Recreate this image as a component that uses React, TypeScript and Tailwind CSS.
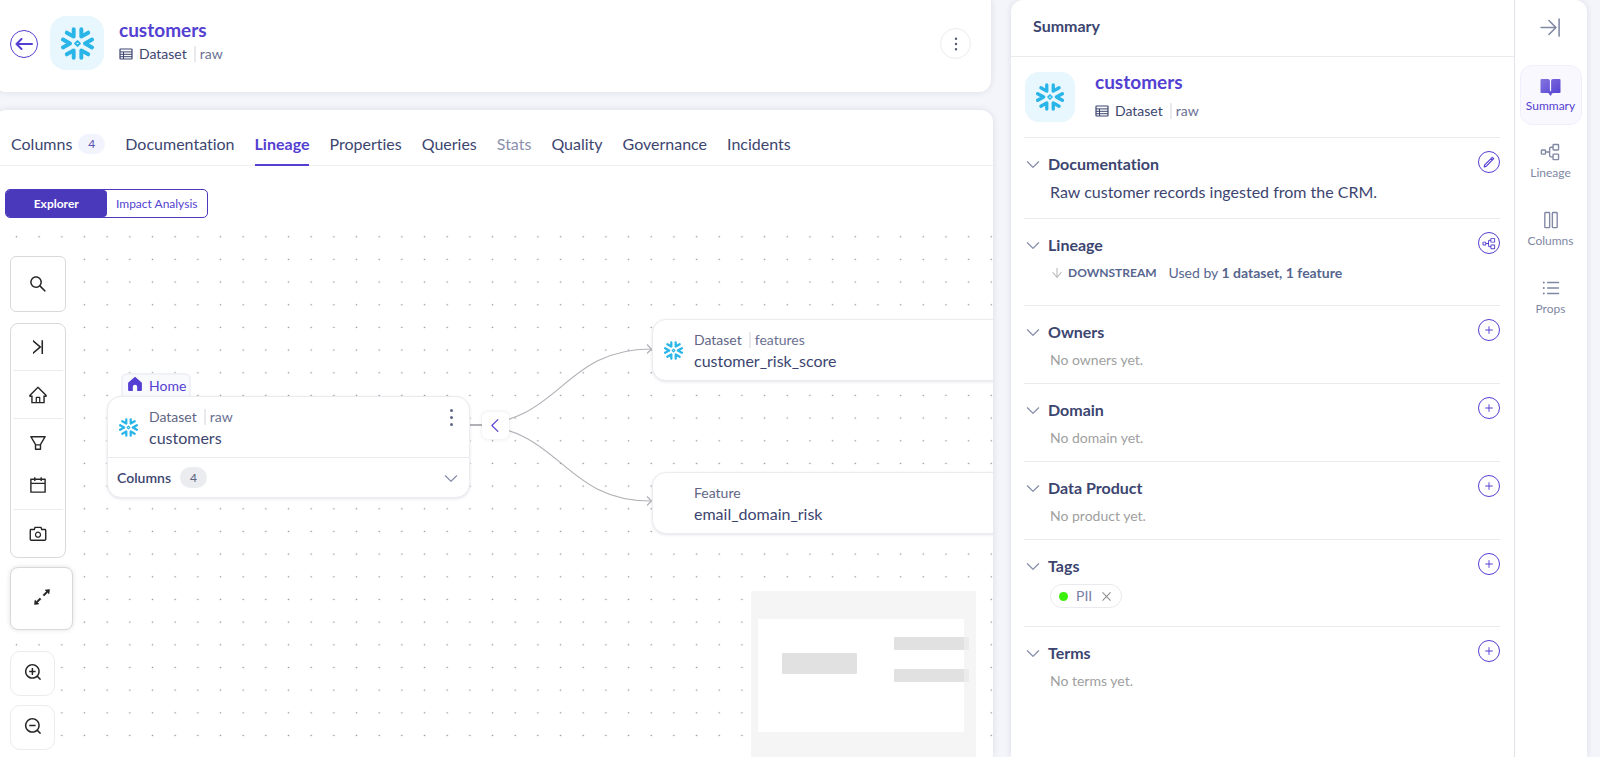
import type { ReactNode } from "react";
import {
  AiOutlineArrowDown,
  AiOutlineArrowsAlt,
  AiOutlineCalendar,
  AiOutlineCamera,
  AiOutlineClose,
  AiOutlineFilter,
  AiOutlineHome,
  AiOutlineSearch,
  AiOutlineVerticalLeft,
  AiOutlineZoomIn,
  AiOutlineZoomOut,
} from "react-icons/ai";
import {
  PiArrowLineRight,
  PiCaretDown,
  PiCaretLeft,
  PiColumns,
  PiDotsThreeVerticalBold,
  PiListBullets,
  PiPlusBold,
  PiTreeStructure,
} from "react-icons/pi";

const tabs = [
  { name: "Columns", count: 4 },
  { name: "Documentation" },
  { name: "Lineage", active: true },
  { name: "Properties" },
  { name: "Queries" },
  { name: "Stats", disabled: true },
  { name: "Quality" },
  { name: "Governance" },
  { name: "Incidents" },
];

const railItems = [
  { name: "Lineage", icon: <PiTreeStructure size={22} /> },
  { name: "Columns", icon: <PiColumns size={22} /> },
  { name: "Props", icon: <PiListBullets size={22} /> },
];

function SnowflakeLogo({ size }: { size: number }) {
  return (
    <svg
      width={size}
      height={size}
      viewBox="0 0 32 32"
      fill="none"
      stroke="#29b5e8"
      strokeWidth="3.800"
      strokeLinecap="round"
      strokeLinejoin="round"
      aria-hidden="true"
    >
      <path d="M12.300 2.200V9.300L5.600 5.500M19.700 2.200V9.300L26.400 5.500" />
      <path d="M12.300 29.800V22.700L5.600 26.500M19.700 29.800V22.700L26.400 26.500" />
      <path d="M1.900 12.200 8.700 16 1.900 19.800M30.100 12.200 23.300 16 30.100 19.800" />
      <path d="M16 13.700 18.300 16 16 18.300 13.700 16Z" strokeWidth="1.900" />
    </svg>
  );
}

function TableIcon() {
  return (
    <svg width="14" height="12" viewBox="0 0 14 12" fill="none" stroke="currentColor" aria-hidden="true">
      <rect x="1" y="1" width="12" height="10" rx="0.5" strokeWidth="1.2" />
      <path d="M1 3.9h12M1 6.3h12M1 8.7h12M4.5 3.9V11" strokeWidth="1" />
    </svg>
  );
}

function BackIcon() {
  return (
    <svg width="18" height="12" viewBox="0 0 18 12" fill="none" stroke="currentColor" strokeWidth="2" aria-hidden="true">
      <path d="M17 6H1.500M6.500 1 1.500 6 6.500 11" strokeLinecap="round" strokeLinejoin="round" />
    </svg>
  );
}

function PencilIcon() {
  return (
    <svg width="12" height="12" viewBox="0 0 12 12" fill="none" stroke="currentColor" strokeWidth="1.200" aria-hidden="true">
      <path d="M1.200 10.800 1.700 8.900 9.300 1.300 10.700 2.700 3.100 10.300ZM7.800 2.800 9.200 4.200" strokeLinejoin="round" />
    </svg>
  );
}

function HomeIcon() {
  return (
    <svg width="16" height="16" viewBox="0 0 16 16" fill="#533fd1" aria-hidden="true">
      <path d="M8 .8 1.6 6.2a1.4 1.4 0 0 0-.5 1.1V14a1 1 0 0 0 1 1h3.7v-4a2.2 2.2 0 0 1 4.4 0v4h3.7a1 1 0 0 0 1-1V7.300a1.400 1.400 0 0 0-.5-1.100Z" />
    </svg>
  );
}

function BookIcon() {
  return (
    <svg width="21" height="18" viewBox="0 0 21 18" aria-hidden="true">
      <defs>
        <linearGradient id="book" x1="0" y1="0" x2="1" y2="1">
          <stop offset="0" stopColor="#8375df" />
          <stop offset="1" stopColor="#533fd1" />
        </linearGradient>
      </defs>
      <path
        d="M1.500 1H8Q9.900 1 9.900 2.800V12.500Q9.900 13.200 10.500 13.200T11.100 12.500V2.800Q11.100 1 13 1H19.500Q20.500 1 20.500 2V14Q20.500 15 19.500 15H13.500Q11.500 15 11.300 17Q11 17.800 10.500 17.800T9.700 17Q9.500 15 7.500 15H1.500Q.5 15 .5 14V2Q.5 1 1.500 1Z"
        fill="url(#book)"
      />
    </svg>
  );
}

function EntityType({ type, detail }: { type: string; detail?: string }) {
  return (
    <span className="flex items-center text-sm leading-5">
      {type}
      {detail && (
        <span className="ml-[7px] flex items-center gap-1 text-[#6b7193]">
          <span className="h-4 w-0.5 bg-[#e9eaee]" />
          {detail}
        </span>
      )}
    </span>
  );
}

function Section({
  title,
  action,
  icon,
  children,
}: {
  title: string;
  action: string;
  icon?: ReactNode;
  children: ReactNode;
}) {
  return (
    <section className="border-t border-[#e9eaee] pt-[13px]">
      <div className="flex h-[22px] items-center">
        <h3 className="flex-1 pt-1">
          <button className="flex items-center gap-1.5 text-base leading-5 font-bold text-[#3c4570]">
            <PiCaretDown size={18} className="text-[#8088a3]" />
            {title}
          </button>
        </h3>
        <button
          aria-label={action}
          className="flex size-[22px] items-center justify-center rounded-full border border-[#533fd1] text-[#533fd1]"
        >
          {icon ?? <PiPlusBold size={10} />}
        </button>
      </div>
      {children}
    </section>
  );
}

function EmptyText({ children }: { children: ReactNode }) {
  return <p className="mt-[9px] pb-[13px] pl-[26px] text-sm leading-5 text-[#a0a0a0]">{children}</p>;
}

function Header() {
  return (
    <header className="-ml-1.5 mr-0.5 flex h-[92px] shrink-0 items-start rounded-b-xl bg-white pt-4 pr-5 pl-4 shadow-[0_0_6px_rgba(50,50,93,0.12)]">
      <button
        aria-label="Back"
        className="mt-3.5 flex size-7 items-center justify-center rounded-full border border-[#533fd1] text-[#533fd1]"
      >
        <BackIcon />
      </button>
      <div className="ml-3 flex size-[54px] items-center justify-center rounded-2xl bg-[#e8f6fd]">
        <SnowflakeLogo size={33} />
      </div>
      <div className="ml-[15px] flex-1 text-[#3c4570]">
        <h1 className="pt-0.5 text-[19px] leading-6 font-bold text-[#533fd1]">customers</h1>
        <div className="mt-0.5 flex items-center gap-1.5">
          <TableIcon />
          <EntityType type="Dataset" detail="raw" />
        </div>
      </div>
      <button
        aria-label="More options"
        className="mt-3 flex size-[31px] items-center justify-center rounded-full border border-[#ebecf0] text-[#5c6370]"
      >
        <PiDotsThreeVerticalBold size={20} />
      </button>
    </header>
  );
}

function Tabs() {
  return (
    <nav className="flex h-14 shrink-0 items-end gap-5 border-b border-[#eeeeee] pl-[17px] text-base text-[#3c4570]">
      {tabs.map((tab) => (
        <button
          key={tab.name}
          disabled={tab.disabled}
          className={
            tab.active
              ? "-mb-px border-b-2 border-[#533fd1] pb-2 leading-6 font-bold text-[#533fd1]"
              : "flex items-center pb-[9px] leading-6 disabled:text-[#8b90ad]"
          }
        >
          {tab.name}
          {tab.count && (
            <span className="ml-1.5 rounded-full bg-[#f1f3fd] px-2.5 text-xs leading-5 text-[#5c4fae]">
              {tab.count}
            </span>
          )}
        </button>
      ))}
    </nav>
  );
}

function Controls() {
  return (
    <div className="absolute top-8 left-2.5 flex flex-col items-start text-[#262626]">
      <button
        aria-label="Search"
        className="flex size-14 items-center justify-center rounded-md border border-[#d9d9d9] bg-white"
      >
        <AiOutlineSearch size={20} />
      </button>
      <div className="mt-[11px] flex w-14 flex-col divide-y divide-[#ececec] rounded-lg border border-[#d9d9d9] bg-white px-0.5">
        <button aria-label="Collapse controls" className="flex h-[47px] w-full items-center justify-center">
          <AiOutlineVerticalLeft size={20} />
        </button>
        <button aria-label="Home" className="flex h-12 w-full items-center justify-center">
          <AiOutlineHome size={20} />
        </button>
        <div className="flex h-[91px] flex-col items-center justify-center">
          <button aria-label="Filter" className="flex h-[42px] w-full items-center justify-center">
            <AiOutlineFilter size={20} />
          </button>
          <button aria-label="Time range" className="flex h-[42px] w-full items-center justify-center">
            <AiOutlineCalendar size={20} />
          </button>
        </div>
        <button aria-label="Screenshot" className="flex h-[47px] w-full items-center justify-center">
          <AiOutlineCamera size={20} />
        </button>
      </div>
      <button
        aria-label="Full screen"
        className="mt-[9px] flex size-[63px] items-center justify-center rounded-lg border border-[#d9d9d9] bg-white pb-1 shadow-[0_0_5px_rgba(0,0,0,0.12)]"
      >
        <AiOutlineArrowsAlt size={22} stroke="currentColor" strokeWidth={24} />
      </button>
      <button
        aria-label="Zoom in"
        className="mt-[21px] flex size-[45px] items-center justify-center rounded-[10px] border border-[#ececec] bg-white pb-1"
      >
        <AiOutlineZoomIn size={20} />
      </button>
      <button
        aria-label="Zoom out"
        className="mt-[9px] flex size-[45px] items-center justify-center rounded-[10px] border border-[#ececec] bg-white pb-1"
      >
        <AiOutlineZoomOut size={20} />
      </button>
    </div>
  );
}

const nodeClass =
  "absolute w-[363px] rounded-[14px] border border-[#ebecf0] bg-white text-[#5f6685] shadow-[0_1px_3px_rgba(50,50,93,0.12)]";

function NodeHead({ name, type, detail }: { name: string; type: string; detail?: string }) {
  return (
    <div className="flex h-[60px] items-center pl-[11px]">
      <div className="w-[30px]">{detail && <SnowflakeLogo size={19} />}</div>
      <div className="pt-px">
        <EntityType type={type} detail={detail} />
        <p className="text-base leading-[22px] text-[#3c4570]">{name}</p>
      </div>
    </div>
  );
}

function Canvas() {
  return (
    <div className="relative flex-1 overflow-hidden">
      <svg className="absolute inset-0 h-full w-full" aria-hidden="true">
        <defs>
          <pattern id="dots" x="5.200" y="1.400" width="22.670" height="22.670" patternUnits="userSpaceOnUse">
            <circle cx="11.300" cy="11.300" r="0.800" fill="#91919a" />
          </pattern>
        </defs>
        <rect width="100%" height="100%" fill="url(#dots)" />
        <g fill="none" stroke="#b1b1b7" strokeWidth="1.200">
          <path d="M470 201H482" strokeWidth="2" />
          <path d="M470 201C561 201 561 125 651 125" />
          <path d="M470 201C561 201 561 277 651 277" />
          <path d="M647 120.500 651.500 125 647 129.500M647 272.500 651.500 277 647 281.500" />
        </g>
      </svg>

      <div className="absolute top-[149px] left-[121px] flex h-7 w-[70px] gap-1.5 rounded-t-md border-2 border-[#f0f1f6] bg-[#f9fafc] pt-px pl-1 text-sm leading-5 text-[#533fd1]">
        <HomeIcon />
        Home
      </div>
      <article className={`${nodeClass} top-[172px] left-[107px]`}>
        <div className="flex justify-between">
          <NodeHead name="customers" type="Dataset" detail="raw" />
          <button aria-label="Node menu" className="mr-3.5 flex w-2 flex-col items-center gap-1 pt-3">
            <span className="size-[3px] rounded-full bg-[#5f6685]" />
            <span className="size-[3px] rounded-full bg-[#5f6685]" />
            <span className="size-[3px] rounded-full bg-[#5f6685]" />
          </button>
        </div>
        <button className="flex h-10 w-full items-center border-t border-[#e9eaee] px-[9px] text-sm font-semibold text-[#3c4570]">
          Columns
          <span className="ml-[9px] rounded-full bg-[#ebecf0] px-2.5 text-xs leading-[21px] font-medium text-[#5f6685]">4</span>
          <PiCaretDown size={18} className="ml-auto text-[#8088a3]" />
        </button>
      </article>
      <button
        aria-label="Contract"
        className="absolute top-[188px] left-[482px] flex size-[27px] items-center justify-center rounded-md bg-white text-[#533fd1] shadow-[0_0_4px_rgba(50,50,93,0.12)]"
      >
        <PiCaretLeft size={19} />
      </button>
      <article className={`${nodeClass} top-[95px] left-[652px]`}>
        <NodeHead name="customer_risk_score" type="Dataset" detail="features" />
      </article>
      <article className={`${nodeClass} top-[248px] left-[652px]`}>
        <NodeHead name="email_domain_risk" type="Feature" />
      </article>

      <svg className="absolute top-[367px] right-[17px] bg-[#f5f5f5]" width="225" height="170" aria-label="Minimap">
        <rect x="7" y="28" width="206" height="113" fill="#fff" />
        <g fill="#e1e1e1">
          <rect x="31" y="62" width="75" height="21" rx="1" />
          <rect x="143" y="46" width="75" height="13" rx="1" />
          <rect x="143" y="78" width="75" height="13" rx="1" />
        </g>
        <rect x="213" y="40" width="12" height="60" fill="#f5f5f5" opacity="0.500" />
      </svg>
      <Controls />
    </div>
  );
}

function SummaryPanel() {
  return (
    <aside className="flex w-[576px] shrink-0 overflow-hidden rounded-t-xl bg-white shadow-[0_0_6px_rgba(50,50,93,0.12)]">
      <div className="flex-1">
        <h2 className="h-[57px] border-b border-[#e9eaee] pt-[15px] pl-[22px] text-base leading-[22px] font-bold text-[#3c4570]">
          Summary
        </h2>
        <div className="pr-3.5 pl-[13px]">
          <div className="flex h-20 pt-[15px] pl-px">
            <div className="flex size-[50px] items-center justify-center rounded-[14px] bg-[#e8f6fd]">
              <SnowflakeLogo size={28} />
            </div>
            <div className="ml-5 -mt-0.5 text-[#3c4570]">
              <p className="text-[19px] leading-6 font-bold text-[#533fd1]">customers</p>
              <div className="mt-[7px] flex items-center gap-1.5">
                <TableIcon />
                <EntityType type="Dataset" detail="raw" />
              </div>
            </div>
          </div>
          <Section title="Documentation" action="Edit documentation" icon={<PencilIcon />}>
            <p className="mt-[7px] pb-3.5 pl-[26px] text-base leading-6 text-[#3c4570]">
              Raw customer records ingested from the CRM.
            </p>
          </Section>
          <Section title="Lineage" action="View lineage" icon={<PiTreeStructure size={15} />}>
            <p className="mt-[9px] flex items-center pb-[22px] pl-[26px] text-sm leading-5 text-[#56668e]">
              <AiOutlineArrowDown size={14} className="text-[#b8b8b8]" />
              <span className="ml-1 text-xs leading-5 font-bold">DOWNSTREAM</span>
              <span className="ml-3">
                Used by <b>1 dataset, 1 feature</b>
              </span>
            </p>
          </Section>
          <Section title="Owners" action="Add owners">
            <EmptyText>No owners yet.</EmptyText>
          </Section>
          <Section title="Domain" action="Set domain">
            <EmptyText>No domain yet.</EmptyText>
          </Section>
          <Section title="Data Product" action="Set data product">
            <EmptyText>No product yet.</EmptyText>
          </Section>
          <Section title="Tags" action="Add tags">
            <div className="mt-[9px] ml-[26px] pb-[18px]">
              <span className="inline-flex h-6 items-center rounded-full border border-[#e9eaee] px-2 align-top text-sm text-[#7780a5]">
                <span className="mr-2 size-[9px] rounded-full bg-[#3bf00c]" />
                PII
                <button aria-label="Remove PII" className="ml-2 text-[#8c8c8c]">
                  <AiOutlineClose size={13} />
                </button>
              </span>
            </div>
          </Section>
          <Section title="Terms" action="Add terms">
            <EmptyText>No terms yet.</EmptyText>
          </Section>
        </div>
      </div>
      <div className="flex w-[73px] shrink-0 flex-col items-center gap-2 border-l border-[#e0e2ea] pr-px text-xs text-[#8088a3]">
        <button aria-label="Close panel" className="flex h-[57px] items-center pb-0.5">
          <PiArrowLineRight size={25} />
        </button>
        <button className="flex h-[60px] w-[62px] flex-col items-center gap-0.5 rounded-xl border border-[#f0eefc] bg-[#f9f8fe] pt-3 leading-4 text-[#533fd1]">
          <BookIcon />
          Summary
        </button>
        {railItems.map((item) => (
          <button key={item.name} className="flex h-[60px] w-[62px] flex-col items-center gap-0.5 pt-2 leading-4">
            {item.icon}
            {item.name}
          </button>
        ))}
      </div>
    </aside>
  );
}

export default function App() {
  return (
    <div className="flex h-screen gap-[18px] overflow-hidden bg-[#f4f5fa] pr-[13px] font-['Lato',sans-serif] [font-variant-ligatures:none]">
      <main className="flex min-w-0 flex-1 flex-col gap-[18px]">
        <Header />
        <div className="-ml-1.5 flex min-h-0 flex-1 flex-col rounded-t-xl bg-white shadow-[0_0_6px_rgba(50,50,93,0.12)]">
          <Tabs />
          <div className="mt-[23px] mb-1.5 ml-[11px] flex h-[29px] w-[203px] shrink-0 rounded-[5px] border border-[#4b39bc] text-xs">
            <button className="flex-1 rounded-[4px] bg-[#4b39bc] font-bold text-white">Explorer</button>
            <button className="flex-1 text-[#533fd1]">Impact Analysis</button>
          </div>
          <div className="flex min-h-0 flex-1 pl-1.5">
            <Canvas />
          </div>
        </div>
      </main>
      <SummaryPanel />
    </div>
  );
}
